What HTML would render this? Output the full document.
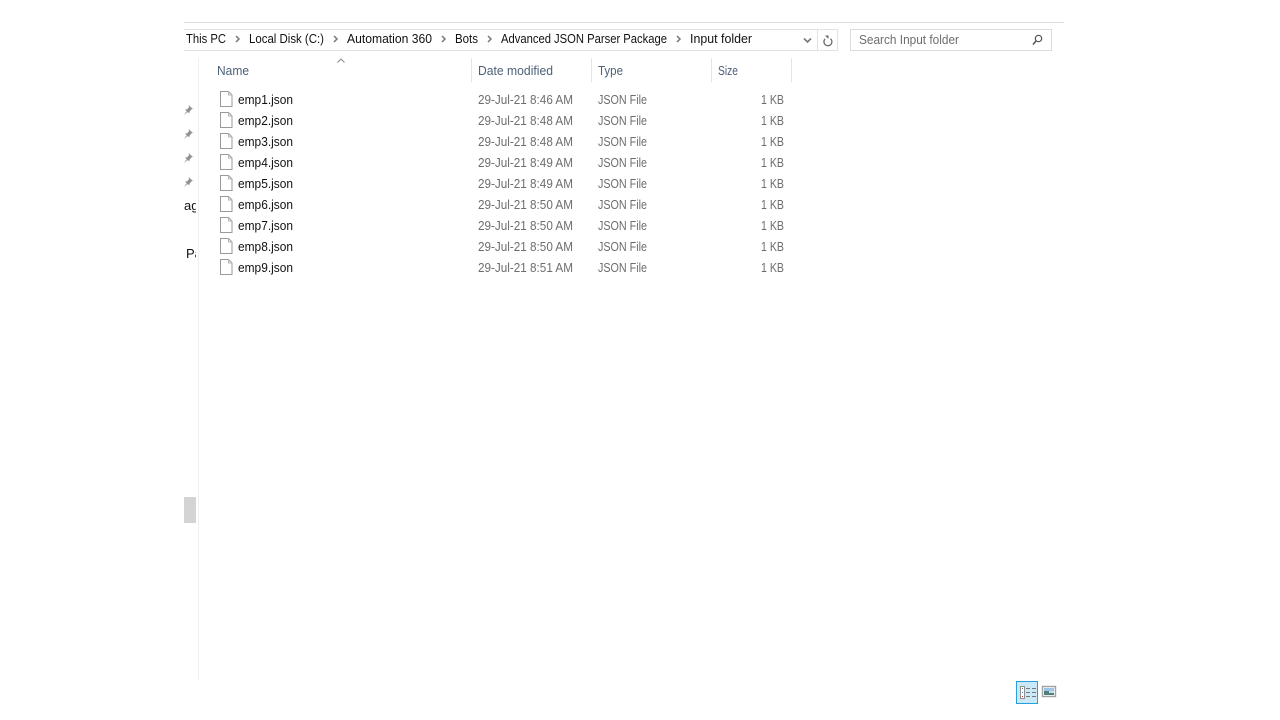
<!DOCTYPE html>
<html><head><meta charset="utf-8"><title>Input folder</title>
<style>
html,body{margin:0;padding:0;background:#fff;width:1280px;height:720px;overflow:hidden}
svg{display:block}
text{font-family:"Liberation Sans",sans-serif;font-size:13px}
.b{fill:#111}
.h{fill:#4c607a}
.g{fill:#6d6d6d}
.s{fill:#6d6d6d}
</style></head><body>
<svg width="1280" height="720" viewBox="0 0 1280 720" xmlns="http://www.w3.org/2000/svg">
<defs>
<g id="f"><path d="M220.500 91.500h8l3.500 3.500v11.500h-11.500z" fill="#fff" stroke="#9a9a9a"/><path d="M228.500 91.500v3.500h3.500" fill="none" stroke="#b5b5b5"/></g>
<path id="pin" d="M.5-5l4.500 4-1.500.2-2 2.500v1.800l-1.800-1.500-3.700 3 2.700-3.700-1.700-1.600 1.800-.3 2.200-2z" fill="#8f9296"/>
<path id="ch" d="M0 0l3 3-3 3" fill="none" stroke="#777" stroke-width="1.500"/>
</defs>

<rect x="184" y="22" width="880" height="1" fill="#dedede"/>
<rect x="184" y="29" width="654" height="1" fill="#e2e2e2"/>
<rect x="184" y="50" width="654" height="1" fill="#e2e2e2"/>
<rect x="817" y="29" width="1" height="22" fill="#e2e2e2"/>
<rect x="837" y="29" width="1" height="22" fill="#e2e2e2"/>
<rect x="850.500" y="29.500" width="201" height="21" fill="#fff" stroke="#dcdcdc"/>

<text class="b" x="186" y="43" textLength="40" lengthAdjust="spacingAndGlyphs">This PC</text>
<use href="#ch" x="236" y="36"/>
<text class="b" x="249" y="43" textLength="75" lengthAdjust="spacingAndGlyphs">Local Disk (C:)</text>
<use href="#ch" x="334" y="36"/>
<text class="b" x="347" y="43" textLength="85" lengthAdjust="spacingAndGlyphs">Automation 360</text>
<use href="#ch" x="442" y="36"/>
<text class="b" x="455" y="43" textLength="23" lengthAdjust="spacingAndGlyphs">Bots</text>
<use href="#ch" x="488" y="36"/>
<text class="b" x="501" y="43" textLength="166" lengthAdjust="spacingAndGlyphs">Advanced JSON Parser Package</text>
<use href="#ch" x="677" y="36"/>
<text class="b" x="690" y="43" textLength="62" lengthAdjust="spacingAndGlyphs">Input folder</text>

<path d="M804 38.500l3.500 3.500 3.500-3.500" fill="none" stroke="#777" stroke-width="1.600"/>
<path d="M830.500 37.700a4 4 0 1 1-5.500 .3" fill="none" stroke="#666" stroke-width="1.300" transform="translate(0 1)"/>
<path d="M825 34.500h3.500v3.500z" fill="#666" transform="translate(0 1)"/>

<text class="s" x="859" y="44" textLength="100" lengthAdjust="spacingAndGlyphs">Search Input folder</text>
<circle cx="1038.500" cy="38.500" r="3.200" fill="none" stroke="#555" stroke-width="1.200"/>
<path d="M1036 41l-3 3.500" stroke="#555" stroke-width="1.500" fill="none"/>

<rect x="198" y="58" width="1" height="622" fill="#f0f0f0"/>
<rect x="471" y="58" width="1" height="24" fill="#e5e5e5"/>
<rect x="591" y="58" width="1" height="24" fill="#e5e5e5"/>
<rect x="711" y="58" width="1" height="24" fill="#e5e5e5"/>
<rect x="791" y="58" width="1" height="24" fill="#e5e5e5"/>
<path d="M337.500 62.500l3.500-3.500 3.500 3.500" fill="none" stroke="#8a8a8a"/>
<text class="h" x="217" y="75" textLength="32" lengthAdjust="spacingAndGlyphs">Name</text>
<text class="h" x="478" y="75" textLength="75" lengthAdjust="spacingAndGlyphs">Date modified</text>
<text class="h" x="598" y="75" textLength="25" lengthAdjust="spacingAndGlyphs">Type</text>
<text class="h" x="718" y="75" textLength="20" lengthAdjust="spacingAndGlyphs">Size</text>

<use href="#pin" x="188" y="110"/>
<use href="#pin" x="188" y="134"/>
<use href="#pin" x="188" y="158"/>
<use href="#pin" x="188" y="182"/>
<svg x="184" y="196" width="12" height="70"><text class="b" x="0" y="14">ag</text><text class="b" x="2" y="62">Pa</text></svg>
<rect x="184" y="497" width="12" height="26" fill="#d4d4d4"/>

<g>
<use href="#f"/>
<text class="b" x="238" y="104" textLength="55" lengthAdjust="spacingAndGlyphs">emp1.json</text>
<text class="g" x="478" y="104" textLength="95" lengthAdjust="spacingAndGlyphs">29-Jul-21 8:46 AM</text>
<text class="g" x="598" y="104" textLength="49" lengthAdjust="spacingAndGlyphs">JSON File</text>
<text class="g" x="761" y="104" textLength="23" lengthAdjust="spacingAndGlyphs">1 KB</text>
</g>
<g transform="translate(0 21)">
<use href="#f"/>
<text class="b" x="238" y="104" textLength="55" lengthAdjust="spacingAndGlyphs">emp2.json</text>
<text class="g" x="478" y="104" textLength="95" lengthAdjust="spacingAndGlyphs">29-Jul-21 8:48 AM</text>
<text class="g" x="598" y="104" textLength="49" lengthAdjust="spacingAndGlyphs">JSON File</text>
<text class="g" x="761" y="104" textLength="23" lengthAdjust="spacingAndGlyphs">1 KB</text>
</g>
<g transform="translate(0 42)">
<use href="#f"/>
<text class="b" x="238" y="104" textLength="55" lengthAdjust="spacingAndGlyphs">emp3.json</text>
<text class="g" x="478" y="104" textLength="95" lengthAdjust="spacingAndGlyphs">29-Jul-21 8:48 AM</text>
<text class="g" x="598" y="104" textLength="49" lengthAdjust="spacingAndGlyphs">JSON File</text>
<text class="g" x="761" y="104" textLength="23" lengthAdjust="spacingAndGlyphs">1 KB</text>
</g>
<g transform="translate(0 63)">
<use href="#f"/>
<text class="b" x="238" y="104" textLength="55" lengthAdjust="spacingAndGlyphs">emp4.json</text>
<text class="g" x="478" y="104" textLength="95" lengthAdjust="spacingAndGlyphs">29-Jul-21 8:49 AM</text>
<text class="g" x="598" y="104" textLength="49" lengthAdjust="spacingAndGlyphs">JSON File</text>
<text class="g" x="761" y="104" textLength="23" lengthAdjust="spacingAndGlyphs">1 KB</text>
</g>
<g transform="translate(0 84)">
<use href="#f"/>
<text class="b" x="238" y="104" textLength="55" lengthAdjust="spacingAndGlyphs">emp5.json</text>
<text class="g" x="478" y="104" textLength="95" lengthAdjust="spacingAndGlyphs">29-Jul-21 8:49 AM</text>
<text class="g" x="598" y="104" textLength="49" lengthAdjust="spacingAndGlyphs">JSON File</text>
<text class="g" x="761" y="104" textLength="23" lengthAdjust="spacingAndGlyphs">1 KB</text>
</g>
<g transform="translate(0 105)">
<use href="#f"/>
<text class="b" x="238" y="104" textLength="55" lengthAdjust="spacingAndGlyphs">emp6.json</text>
<text class="g" x="478" y="104" textLength="95" lengthAdjust="spacingAndGlyphs">29-Jul-21 8:50 AM</text>
<text class="g" x="598" y="104" textLength="49" lengthAdjust="spacingAndGlyphs">JSON File</text>
<text class="g" x="761" y="104" textLength="23" lengthAdjust="spacingAndGlyphs">1 KB</text>
</g>
<g transform="translate(0 126)">
<use href="#f"/>
<text class="b" x="238" y="104" textLength="55" lengthAdjust="spacingAndGlyphs">emp7.json</text>
<text class="g" x="478" y="104" textLength="95" lengthAdjust="spacingAndGlyphs">29-Jul-21 8:50 AM</text>
<text class="g" x="598" y="104" textLength="49" lengthAdjust="spacingAndGlyphs">JSON File</text>
<text class="g" x="761" y="104" textLength="23" lengthAdjust="spacingAndGlyphs">1 KB</text>
</g>
<g transform="translate(0 147)">
<use href="#f"/>
<text class="b" x="238" y="104" textLength="55" lengthAdjust="spacingAndGlyphs">emp8.json</text>
<text class="g" x="478" y="104" textLength="95" lengthAdjust="spacingAndGlyphs">29-Jul-21 8:50 AM</text>
<text class="g" x="598" y="104" textLength="49" lengthAdjust="spacingAndGlyphs">JSON File</text>
<text class="g" x="761" y="104" textLength="23" lengthAdjust="spacingAndGlyphs">1 KB</text>
</g>
<g transform="translate(0 168)">
<use href="#f"/>
<text class="b" x="238" y="104" textLength="55" lengthAdjust="spacingAndGlyphs">emp9.json</text>
<text class="g" x="478" y="104" textLength="95" lengthAdjust="spacingAndGlyphs">29-Jul-21 8:51 AM</text>
<text class="g" x="598" y="104" textLength="49" lengthAdjust="spacingAndGlyphs">JSON File</text>
<text class="g" x="761" y="104" textLength="23" lengthAdjust="spacingAndGlyphs">1 KB</text>
</g>

<rect x="1016.500" y="681.500" width="21" height="22" fill="#cbe8f6" stroke="#26a0da"/>
<rect x="1020.500" y="686.500" width="4" height="12" fill="#fff" stroke="#8f8f8f"/>
<rect x="1022" y="688" width="1" height="1" fill="#777"/>
<rect x="1022" y="692" width="1" height="1" fill="#3a8fd0"/>
<rect x="1022" y="696" width="1" height="1" fill="#d03030"/>
<path d="M1026 688.500h4M1032 688.500h4M1026 692.500h4M1032 692.500h4M1026 696.500h4M1032 696.500h4" stroke="#777" fill="none"/>
<rect x="1042.500" y="686.500" width="13" height="10" fill="#fff" stroke="#a0a0a0" stroke-width="1.400"/>
<rect x="1044" y="688" width="10" height="3" fill="#9cc4e4"/>
<rect x="1044" y="691" width="10" height="4" fill="#4f7f78"/>
<rect x="1049" y="691" width="5" height="2" fill="#c8dcec"/>
</svg>
</body></html>
